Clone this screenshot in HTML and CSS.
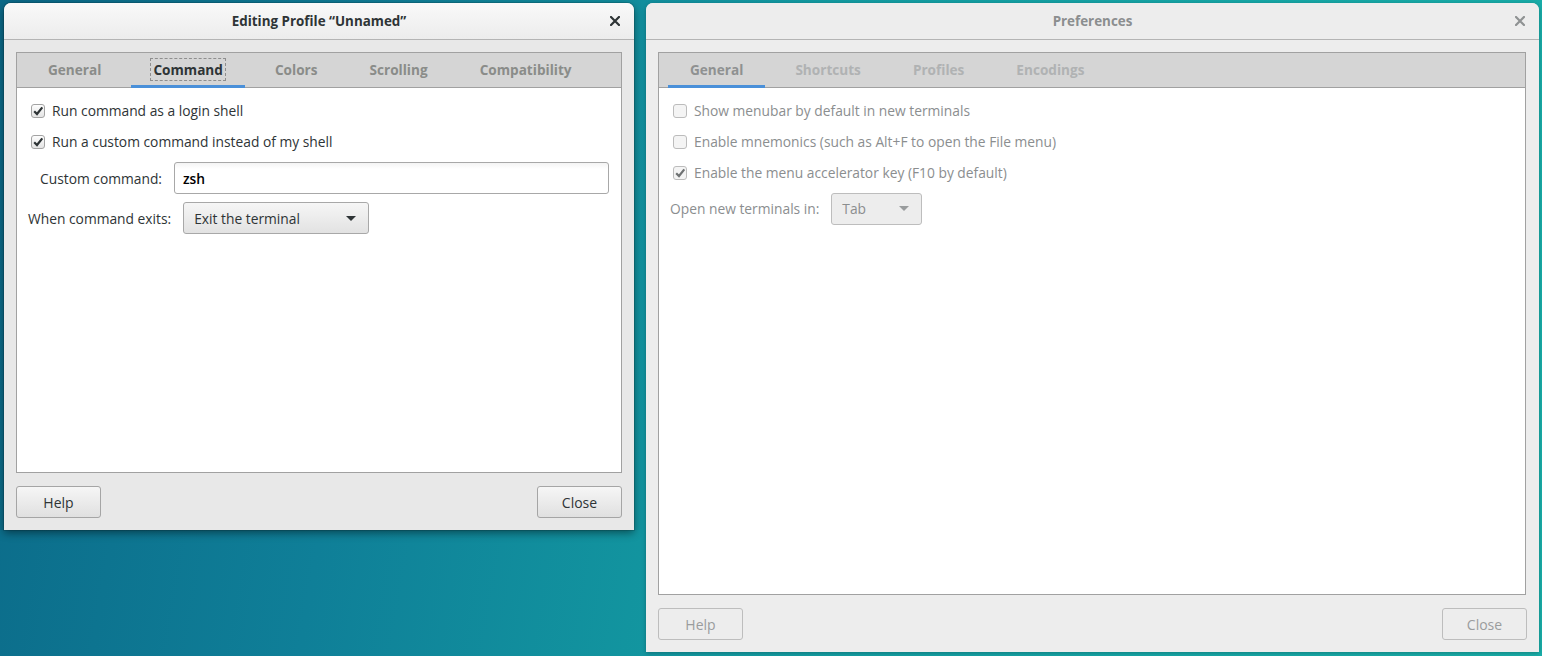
FILE: index.html
```html
<!DOCTYPE html>
<html>
<head>
<meta charset="utf-8">
<link rel="stylesheet" href="styles.css">
</head>
<body>
<div class="desktop">
  <section class="dialog focused left-dlg">
    <header class="titlebar">
      <span class="title">Editing Profile “Unnamed”</span>
      <span class="close-x">
        <svg width="10" height="10" viewBox="0 0 10 10"><path d="M1 1 L9 9 M9 1 L1 9" stroke="currentColor" stroke-width="2.2" stroke-linecap="square"/></svg>
      </span>
    </header>
    <div class="dlg-body">
      <div class="notebook nb-left">
        <nav class="tabs">
          <span class="tab">General</span>
          <span class="tab active"><span class="focus">Command</span></span>
          <span class="tab">Colors</span>
          <span class="tab">Scrolling</span>
          <span class="tab">Compatibility</span>
        </nav>
        <div class="page">
          <label class="check-row">
            <span class="check on"><svg width="12" height="12" viewBox="0 0 12 12"><path d="M2.2 6.2 L5 9 L10.3 2.4" fill="none" stroke="currentColor" stroke-width="2.2"/></svg></span>
            <span>Run command as a login shell</span>
          </label>
          <label class="check-row">
            <span class="check on"><svg width="12" height="12" viewBox="0 0 12 12"><path d="M2.2 6.2 L5 9 L10.3 2.4" fill="none" stroke="currentColor" stroke-width="2.2"/></svg></span>
            <span>Run a custom command instead of my shell</span>
          </label>
          <div class="field-row indent">
            <span class="field-label">Custom command:</span>
            <div class="entry">zsh</div>
          </div>
          <div class="field-row combo-row">
            <span class="field-label">When command exits:</span>
            <div class="combo combo-exit"><span>Exit the terminal</span><span class="arrow"></span></div>
          </div>
        </div>
      </div>
      <div class="actions">
        <button class="btn">Help</button>
        <button class="btn">Close</button>
      </div>
    </div>
  </section>

  <section class="dialog backdrop right-dlg">
    <header class="titlebar">
      <span class="title">Preferences</span>
      <span class="close-x">
        <svg width="10" height="10" viewBox="0 0 10 10"><path d="M1 1 L9 9 M9 1 L1 9" stroke="currentColor" stroke-width="2.2" stroke-linecap="square"/></svg>
      </span>
    </header>
    <div class="dlg-body">
      <div class="notebook nb-right">
        <nav class="tabs">
          <span class="tab active">General</span>
          <span class="tab">Shortcuts</span>
          <span class="tab">Profiles</span>
          <span class="tab">Encodings</span>
        </nav>
        <div class="page">
          <label class="check-row">
            <span class="check"></span>
            <span>Show menubar by default in new terminals</span>
          </label>
          <label class="check-row">
            <span class="check"></span>
            <span>Enable mnemonics (such as Alt+F to open the File menu)</span>
          </label>
          <label class="check-row">
            <span class="check on"><svg width="12" height="12" viewBox="0 0 12 12"><path d="M2.2 6.2 L5 9 L10.3 2.4" fill="none" stroke="currentColor" stroke-width="2.2"/></svg></span>
            <span>Enable the menu accelerator key (F10 by default)</span>
          </label>
          <div class="field-row combo-row2">
            <span class="field-label">Open new terminals in:</span>
            <div class="combo combo-tab"><span>Tab</span><span class="arrow"></span></div>
          </div>
        </div>
      </div>
      <div class="actions">
        <button class="btn">Help</button>
        <button class="btn">Close</button>
      </div>
    </div>
  </section>
</div>
</body>
</html>
```

FILE: styles.css
```css
* { box-sizing: border-box; }
html, body { margin: 0; padding: 0; }
body {
  width: 1542px;
  height: 656px;
  overflow: hidden;
  font-family: "Open Sans", "Noto Sans", "DejaVu Sans", sans-serif;
  font-size: 13.8px;
  background: linear-gradient(100deg, #0b6988 0%, #0f7f98 25%, #139aa1 50%, #16a6a6 75%, #19ada8 100%);
}
.desktop {
  display: flex;
  align-items: flex-start;
  gap: 12px;
  padding: 3px 0 0 4px;
}
.dialog {
  display: flex;
  flex-direction: column;
  border-radius: 7px 7px 0 0;
  overflow: hidden;
}
.left-dlg {
  width: 630px;
  height: 527px;
  background: #e8e8e8;
  box-shadow: 0 3px 9px rgba(0,0,0,0.45), 0 0 0 1px rgba(0,0,0,0.12);
}
.right-dlg {
  width: 893px;
  height: 649px;
  background: #ededed;
  box-shadow: 0 1px 4px rgba(0,0,0,0.25);
}
.titlebar {
  position: relative;
  height: 37px;
  flex: none;
  display: flex;
  align-items: center;
  justify-content: center;
  border-bottom: 1px solid #b4b4b4;
}
.focused .titlebar {
  background: linear-gradient(#f9f9f9, #ececec);
}
.backdrop .titlebar {
  background: #ededed;
}
.title {
  font-weight: 700;
  font-size: 13.4px;
  color: #2e3436;
}
.backdrop .title { color: #8b8e8f; }
.close-x {
  position: absolute;
  right: 14px;
  top: 13px;
  width: 10px;
  height: 10px;
  color: #2e3436;
  display: flex;
}
.backdrop .close-x { color: #8f9293; }

.dlg-body {
  flex: 1;
  display: flex;
  flex-direction: column;
  padding: 12px;
  gap: 13px;
}
.notebook {
  flex: 1;
  display: flex;
  flex-direction: column;
  border: 1px solid #a1a1a1;
  background: #fff;
}
.nb-right { margin-right: 1px; }
.tabs {
  height: 35px;
  flex: none;
  display: flex;
  gap: 8px;
  padding-left: 9px;
  background: #d5d5d5;
  border-bottom: 1px solid #a1a1a1;
}
.tab {
  display: flex;
  align-items: center;
  justify-content: center;
  padding: 1px 22px 0;
  font-size: 13.6px;
  font-weight: 700;
  color: #8a8c89;
  border-bottom: 3px solid transparent;
  margin-bottom: -1px;
}
.tab.active {
  color: #2e3436;
  border-bottom-color: #4a90d9;
}
.backdrop .tab { color: #b0b2b3; }
.backdrop .tab.active { color: #8f9191; border-bottom-color: #4a90d9; }
.focus {
  outline: 1px dashed #8e8e8e;
  outline-offset: 0;
  padding: 1px 2px;
  margin: 0 -2px;
}

.page {
  flex: 1;
  display: flex;
  flex-direction: column;
  gap: 9px;
  padding: 11.5px 12px 12px 11px;
  color: #2e3436;
}
.backdrop .page { color: #8b8e8f; }
.check-row {
  height: 22px;
  display: flex;
  align-items: center;
  gap: 7px;
  padding-left: 3px;
}
.check {
  width: 14px;
  height: 14px;
  border: 1px solid #a3a3a3;
  border-radius: 3px;
  background: linear-gradient(#fdfdfd, #e4e4e4);
  display: flex;
  align-items: center;
  justify-content: center;
  color: #2e3436;
  flex: none;
}
.backdrop .check {
  border-color: #bcbcbc;
  background: #f4f4f4;
  color: #6f7273;
}
.field-row {
  display: flex;
  align-items: center;
  gap: 12px;
}
.indent { padding-left: 12px; margin-top: 0.5px; }
.combo-row { margin-top: -1px; }
.combo-row2 { margin-top: 0; }
.entry {
  flex: 1;
  height: 32px;
  border: 1px solid #a8a8a8;
  border-radius: 3px;
  background: linear-gradient(#f4f4f4, #ffffff 6px);
  display: flex;
  align-items: center;
  padding-left: 8px;
  color: #000;
  font-weight: 600;
}
.combo {
  height: 32px;
  border: 1px solid #a8a8a8;
  border-radius: 3px;
  background: linear-gradient(#f6f6f6, #e2e2e2);
  display: flex;
  align-items: center;
  justify-content: space-between;
  padding: 0 12px 0 10px;
  color: #2e3436;
}
.combo-exit { width: 186px; }
.combo-tab {
  width: 91px;
  background: #ededed;
  border-color: #bdbdbd;
  color: #8b8e8f;
}
.arrow {
  width: 0;
  height: 0;
  border-left: 5px solid transparent;
  border-right: 5px solid transparent;
  border-top: 5px solid #2e3436;
}
.combo-tab .arrow { border-top-color: #999c9d; }

.actions {
  display: flex;
  justify-content: space-between;
  flex: none;
}
.btn {
  width: 85px;
  height: 32px;
  border: 1px solid #a5a5a5;
  border-radius: 3px;
  background: linear-gradient(#f6f6f6, #e0e0e0);
  font-family: inherit;
  font-size: 14px;
  color: #2e3436;
  padding: 0;
}
.backdrop .btn {
  background: #ededed;
  border-color: #bdbdbd;
  color: #9a9c9d;
}
```
